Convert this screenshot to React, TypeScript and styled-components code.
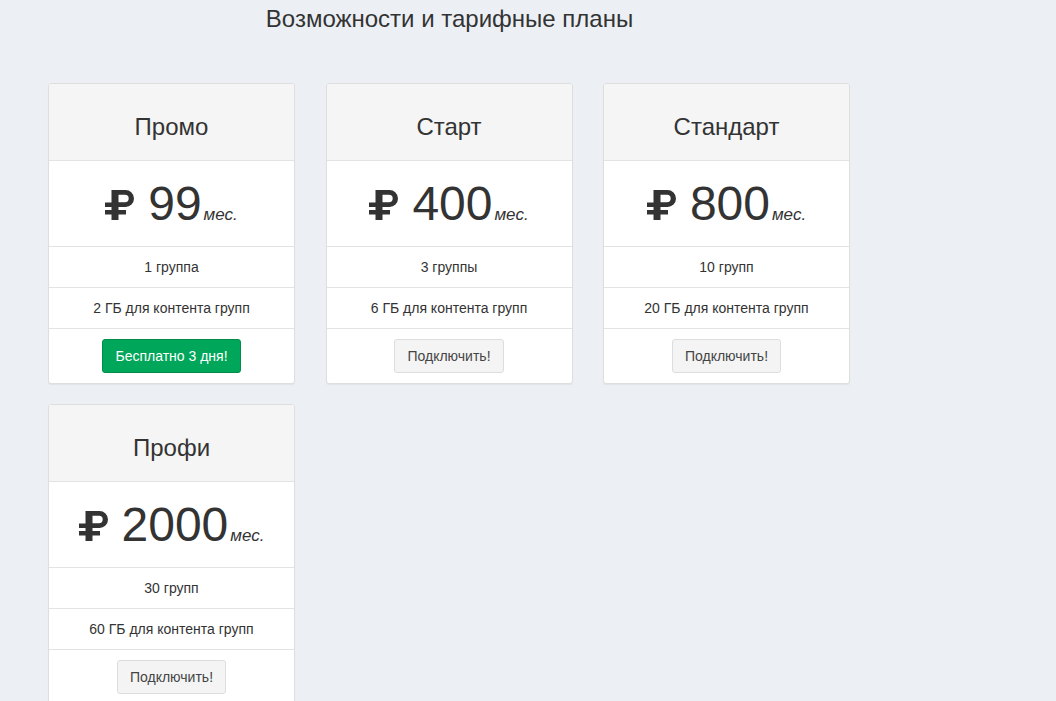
import React from "react";
import styled, { createGlobalStyle } from "styled-components";

const GlobalStyle = createGlobalStyle`
  html, body {
    margin: 0;
    padding: 0;
    background: #ecf0f5;
    font-family: "Liberation Sans", Arial, Helvetica, sans-serif;
    color: #333;
  }
  * { box-sizing: border-box; }
`;

const Page = styled.div`
  padding: 2px 0 0 48px;
  min-height: 701px;
`;

const Content = styled.div`
  width: 803px;
`;

const Title = styled.h3`
  margin: 0 0 47px;
  font-size: 24px;
  font-weight: 400;
  line-height: 34px;
  text-align: center;
  color: #333;
`;

const Grid = styled.div`
  display: grid;
  grid-template-columns: repeat(3, 247px);
  column-gap: 30.5px;
  row-gap: 20px;
  align-items: start;
`;

const Card = styled.div`
  background: #fff;
  border: 1px solid #dedede;
  border-radius: 3px;
  box-shadow: 0 1px 1px rgba(0, 0, 0, 0.05);
  overflow: hidden;
`;

const Header = styled.div`
  height: 77px;
  background: #f5f5f5;
  border-bottom: 1px solid #e3e3e3;
  display: flex;
  align-items: center;
  justify-content: center;
  padding-top: 10px;
  font-size: 24px;
  color: #333;
`;

const PriceRow = styled.div`
  height: 86px;
  border-bottom: 1px solid #e3e3e3;
  display: flex;
  align-items: center;
  justify-content: center;
`;

const Price = styled.div`
  font-size: 48px;
  line-height: 1;
  color: #333;
  white-space: nowrap;
`;

const RubleIcon = styled.svg`
  width: 30px;
  height: 30px;
  vertical-align: baseline;
  margin-right: 13px;
`;

const Per = styled.span`
  font-size: 17px;
  font-style: italic;
  margin-left: 2px;
`;

const Feature = styled.div`
  height: 41px;
  border-bottom: 1px solid #e3e3e3;
  display: flex;
  align-items: center;
  justify-content: center;
  font-size: 14px;
  color: #333;
`;

const Footer = styled.div`
  height: 54px;
  display: flex;
  align-items: center;
  justify-content: center;
`;

const Button = styled.button<{ $variant?: "success" | "default" }>`
  font-family: inherit;
  font-size: 14px;
  line-height: 20px;
  padding: 6px 12px;
  border-radius: 3px;
  cursor: pointer;
  border: 1px solid ${(p) => (p.$variant === "success" ? "#008d4c" : "#ddd")};
  background: ${(p) => (p.$variant === "success" ? "#00a65a" : "#f4f4f4")};
  color: ${(p) => (p.$variant === "success" ? "#fff" : "#444")};
`;

const Ruble = () => (
  <RubleIcon viewBox="0 0 30 30">
    <path
      fill="#333"
      fillRule="evenodd"
      d="M6.5 0 H20.5 A8.5 8.5 0 0 1 20.5 17 H13.5 V20 H21 V24.5 H13.5 V30 H6.5 V24.5 H0 V20 H6.5 V17 H0 V12.5 H6.5 Z M13.5 4.8 V12.2 H20 A3.7 3.7 0 0 0 20 4.8 Z"
    />
  </RubleIcon>
);

type Plan = {
  name: string;
  price: string;
  groups: string;
  storage: string;
  button: string;
  success?: boolean;
};

const plans: Plan[] = [
  { name: "Промо", price: "99", groups: "1 группа", storage: "2 ГБ для контента групп", button: "Бесплатно 3 дня!", success: true },
  { name: "Старт", price: "400", groups: "3 группы", storage: "6 ГБ для контента групп", button: "Подключить!" },
  { name: "Стандарт", price: "800", groups: "10 групп", storage: "20 ГБ для контента групп", button: "Подключить!" },
  { name: "Профи", price: "2000", groups: "30 групп", storage: "60 ГБ для контента групп", button: "Подключить!" },
];

export default function App() {
  return (
    <>
      <GlobalStyle />
      <Page>
        <Content>
          <Title>Возможности и тарифные планы</Title>
          <Grid>
            {plans.map((p) => (
              <Card key={p.name}>
                <Header>{p.name}</Header>
                <PriceRow>
                  <Price>
                    <Ruble />
                    {p.price}
                    <Per>мес.</Per>
                  </Price>
                </PriceRow>
                <Feature>{p.groups}</Feature>
                <Feature>{p.storage}</Feature>
                <Footer>
                  <Button $variant={p.success ? "success" : "default"}>{p.button}</Button>
                </Footer>
              </Card>
            ))}
          </Grid>
        </Content>
      </Page>
    </>
  );
}
